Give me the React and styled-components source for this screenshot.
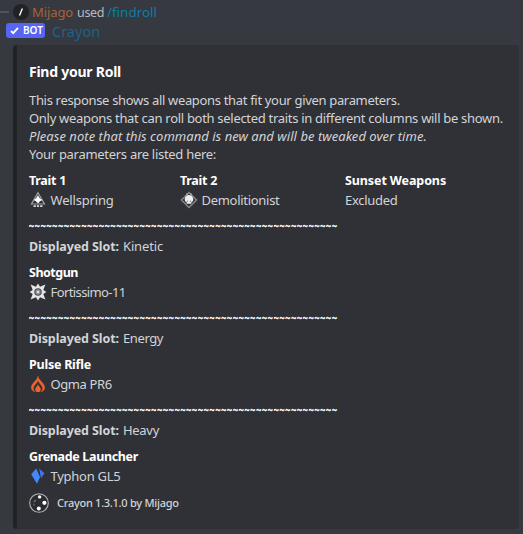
import React from 'react';
import styled, { createGlobalStyle } from 'styled-components';

const GlobalStyle = createGlobalStyle`
  * { box-sizing: border-box; }
  body {
    margin: 0;
    background: #36393f;
    color: #d3d4d6;
    font: 13px/18px "Noto Sans", "Open Sans", sans-serif;
    white-space: nowrap;
    overflow: hidden;
  }
`;

const Message = styled.main`
  width: 523px;
  height: 534px;
  overflow: hidden;
  background: #36393f;
`;

const Run = styled.span`
  letter-spacing: ${(p) => p.$track || 0}px;
`;

const ReplyBar = styled.div`
  display: flex;
  align-items: center;
  height: 22px;
  padding-top: 2px;
`;

const Spine = styled.span`
  width: 9px;
  height: 2px;
  margin-right: 4px;
  background: #4f545c;
`;

const CommandBadge = styled.span`
  display: flex;
  width: 16px;
  height: 16px;
  border-radius: 50%;
  background: #202225;
`;

const ReplyLine = styled.span`
  display: flex;
  align-items: baseline;
`;

const ReplyText = styled.span`
  margin-left: ${(p) => p.$gap}px;
  font-size: ${(p) => p.$size || 13}px;
  letter-spacing: ${(p) => p.$track || 0}px;
  color: ${(p) => p.$color};
`;

const AuthorRow = styled.header`
  display: flex;
  align-items: center;
  height: 17px;
  padding-left: 6px;
`;

const BotTag = styled.span`
  display: flex;
  align-items: center;
  gap: 4px;
  width: 39px;
  height: 15px;
  padding-left: 4px;
  border-radius: 3px;
  background: #5865f2;
  color: #fff;
  font-size: 10px;
  font-weight: 600;
  line-height: 15px;
`;

const Author = styled.span`
  margin-left: 7px;
  font-size: 14.5px;
  color: #1b6388;
`;

const Embed = styled.article`
  width: 506px;
  height: 484px;
  margin: 6px 0 0 13px;
  padding: 17px 12px 0;
  border-left: 4px solid #202225;
  border-radius: 4px;
  background: #2f3136;
`;

const Title = styled.h1`
  height: 20px;
  margin: 0 0 9px;
  font-size: 14px;
  line-height: 20px;
  font-weight: 700;
  letter-spacing: -0.25px;
  color: #fff;
`;

const Description = styled.div`
  display: flex;
  flex-direction: column;
`;

const Line = styled(Run)`
  height: 18px;
  font-style: ${(p) => (p.$italic ? 'italic' : 'normal')};
`;

const Traits = styled.section`
  display: grid;
  grid-template-columns: 151px 165px 1fr;
  margin-top: 7px;
`;

const Label = styled.h2`
  height: 20px;
  margin: 0;
  font-size: 12.5px;
  line-height: 22px;
  font-weight: 700;
  letter-spacing: ${(p) => p.$track || 0}px;
  color: #fff;
`;

const Value = styled.div`
  display: flex;
  align-items: center;
  gap: 3.5px;
  height: 20px;
  line-height: 20px;
`;

const Icon = styled.svg`
  display: block;
  flex: none;
  width: ${(p) => p.$size || 18}px;
  height: ${(p) => p.$size || 18}px;
`;

const Slot = styled.section`
  height: 92px;
  padding-top: 7px;
`;

const Divider = styled.div`
  height: 18px;
  font-size: 8.6px;
  line-height: 18px;
  font-weight: 700;
  letter-spacing: 0.91px;
  color: #fff;
  -webkit-text-stroke: 0.4px #fff;
`;

const SlotName = styled.div`
  display: flex;
  align-items: baseline;
  gap: 4px;
  height: 20px;
  margin: 1px 0 6px;
  line-height: 20px;
`;

const SlotLabel = styled.strong`
  width: 90px;
  font-size: 12.5px;
  letter-spacing: -0.1px;
`;

const Footer = styled.footer`
  display: flex;
  align-items: center;
  gap: 8px;
  height: 20px;
  margin-top: 7px;
  font-size: 11px;
  font-weight: 500;
  letter-spacing: -0.27px;
`;

const SlashIcon = () => (
  <Icon $size={16} viewBox="0 0 16 16">
    <path d="M9.4 4.5 6.5 11.6" stroke="#fff" strokeWidth="1.4" />
  </Icon>
);

const CheckIcon = () => (
  <Icon $size={9} viewBox="0 0 9 9">
    <path d="m1 5 2.2 2.2L8 1.8" fill="none" stroke="#fff" strokeWidth="1.8" />
  </Icon>
);

const WellspringIcon = () => (
  <Icon viewBox="0 0 18 18">
    <path d="M9 1.8 15.5 13H2.5Z" fill="none" stroke="#a2a3a6" strokeWidth="1.2" />
    <path d="M9 4.2 10.8 7.3 13.2 9 10.8 10.4 9 12.4 7.2 10.4 4.8 9 7.2 7.3Z" fill="#fff" />
    <path d="M4.5 15.2h2.4m1 0h2.2m1 0h2.4" stroke="#d4d5d6" strokeWidth="1.7" />
  </Icon>
);

const DemolitionistIcon = () => (
  <Icon viewBox="0 0 18 18">
    <path d="M9 1.5 16.5 9 9 16.5 1.5 9Z" fill="none" stroke="#85878b" strokeWidth="1.5" />
    <path d="M9 4a4.3 4.3 0 0 1 4.3 4.3c0 1.7-.9 2.7-2 3.3v1.1H6.7v-1.1c-1.1-.6-2-1.6-2-3.3A4.3 4.3 0 0 1 9 4Z" fill="#eee" />
    <path d="M6.8 10.2h1.4m1.6 0h1.4" stroke="#77797d" strokeWidth="1.1" />
    <path d="M6.2 3.2h1.4m2.8 0h1.4" stroke="#bbb" strokeWidth="1.3" />
  </Icon>
);

const KineticIcon = () => (
  <Icon viewBox="0 0 18 18">
    <path
      d="M9 .6 11 3.7 16.4 1.6 14.3 7 17.4 9 14.3 11 16.4 16.4 11 14.3 9 17.4 7 14.3 1.6 16.4 3.7 11 .6 9 3.7 7 1.6 1.6 7 3.7Z"
      fill="#e6e6e7"
    />
    <circle cx="9" cy="9" r="3.2" fill="#8b8d90" stroke="#4a4c51" strokeWidth="1.1" />
    <circle cx="9" cy="9" r="1.3" fill="#ddd" />
  </Icon>
);

const SolarIcon = () => (
  <Icon viewBox="0 0 18 18">
    <path
      d="M9 1C8.7 5 2.3 8.3 2.3 12.5c0 2.2 1.5 3.7 3.7 4.5-1.2-1.2-1.6-2.2-1.6-3.7C4.4 10.5 8 8.5 9 5.5c1 3 4.6 5 4.6 7.8 0 1.5-.4 2.5-1.6 3.7 2.2-.8 3.7-2.3 3.7-4.5C15.7 8.3 9.3 5 9 1Z"
      fill="#f0632e"
      stroke="#f0632e"
      strokeWidth=".4"
    />
    <path d="M9 9.3c.3 1.8 2.8 3 2.8 5.2 0 1.6-1.2 2.6-2.8 2.6s-2.8-1-2.8-2.6c0-2.2 2.5-3.4 2.8-5.2Z" fill="#f0632e" />
  </Icon>
);

const StasisIcon = () => (
  <Icon viewBox="0 0 18 18">
    <path d="M7.3 1.4 11 10.2 8 16.8 2.2 7.2Z" fill="#4787fc" />
    <path d="M10.2 1.5 15.5 6.3 12 11.3Z" fill="#3978f0" />
  </Icon>
);

const CrayonIcon = () => (
  <Icon $size={20} viewBox="0 0 20 20">
    <circle cx="10" cy="10" r="9.3" fill="#292b2f" stroke="#b5b6b8" strokeWidth="1.1" />
    <g fill="#fff">
      <circle cx="10.6" cy="3.9" r="1.7" />
      <circle cx="15.4" cy="9.8" r="2.1" />
      <circle cx="9.8" cy="15.4" r="2" />
    </g>
    <path d="m4.7 9 2.2-2M5 12.5v-1.8" stroke="#76787b" strokeWidth="1.1" />
  </Icon>
);

const slots = [
  { name: 'Kinetic', nameTrack: -0.15, type: 'Shotgun', typeTrack: -0.49, weapon: 'Fortissimo-11', track: -0.6, Glyph: KineticIcon },
  { name: 'Energy', nameTrack: -0.4, type: 'Pulse Rifle', typeTrack: -0.24, weapon: 'Ogma PR6', track: -0.4, Glyph: SolarIcon },
  { name: 'Heavy', nameTrack: -0.3, type: 'Grenade Launcher', typeTrack: -0.34, weapon: 'Typhon GL5', track: -0.26, Glyph: StasisIcon },
];

export default function App() {
  return (
    <Message>
      <GlobalStyle />
      <ReplyBar>
        <Spine />
        <CommandBadge><SlashIcon /></CommandBadge>
        <ReplyLine>
          <ReplyText $gap={3} $color="#a5633a" $track={-0.1}>Mijago</ReplyText>
          <ReplyText $gap={4} $color="#b9bbbe" $size={12.5} $track={-0.36}>used</ReplyText>
          <ReplyText $gap={3} $color="#087fa5" $size={13.4}>/findroll</ReplyText>
        </ReplyLine>
      </ReplyBar>
      <AuthorRow>
        <BotTag><CheckIcon />BOT</BotTag>
        <Author>Crayon</Author>
      </AuthorRow>
      <Embed>
        <Title>Find your Roll</Title>
        <Description>
          <Line $track={-0.325}>This response shows all weapons that fit your given parameters.</Line>
          <Line $track={-0.3}>Only weapons that can roll both selected traits in different columns will be shown.</Line>
          <Line $italic $track={0.04}>Please note that this command is new and will be tweaked over time.</Line>
          <Line $track={-0.29}>Your parameters are listed here:</Line>
        </Description>
        <Traits>
          <div>
            <Label $track={-0.28}>Trait 1</Label>
            <Value><WellspringIcon /><Run $track={-0.18}>Wellspring</Run></Value>
          </div>
          <div>
            <Label $track={-0.28}>Trait 2</Label>
            <Value><DemolitionistIcon /><Run $track={-0.29}>Demolitionist</Run></Value>
          </div>
          <div>
            <Label $track={-0.1}>Sunset Weapons</Label>
            <Value><Run $track={-0.28}>Excluded</Run></Value>
          </div>
        </Traits>
        {slots.map(({ name, nameTrack, type, typeTrack, weapon, track, Glyph }) => (
          <Slot key={name}>
            <Divider>{'~'.repeat(53)}</Divider>
            <SlotName>
              <SlotLabel>Displayed Slot:</SlotLabel>
              <Run $track={nameTrack}>{name}</Run>
            </SlotName>
            <Label $track={typeTrack}>{type}</Label>
            <Value><Glyph /><Run $track={track}>{weapon}</Run></Value>
          </Slot>
        ))}
        <Footer><CrayonIcon />Crayon 1.3.1.0 by Mijago</Footer>
      </Embed>
    </Message>
  );
}
